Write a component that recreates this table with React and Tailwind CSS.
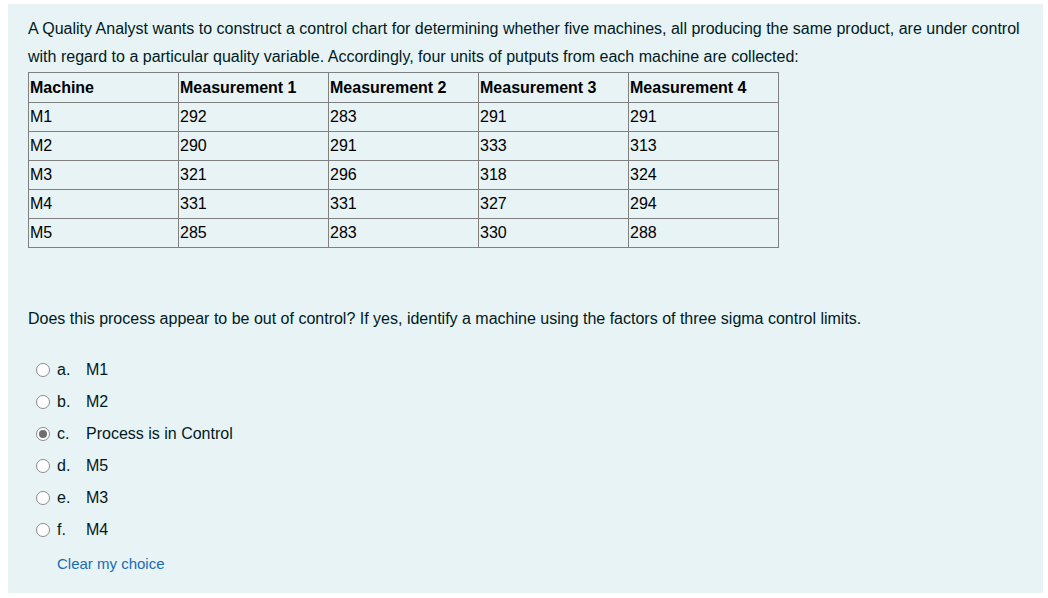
import React from "react";

const rows = [
  ["M1", "292", "283", "291", "291"],
  ["M2", "290", "291", "333", "313"],
  ["M3", "321", "296", "318", "324"],
  ["M4", "331", "331", "327", "294"],
  ["M5", "285", "283", "330", "288"],
];
const heads = ["Machine", "Measurement 1", "Measurement 2", "Measurement 3", "Measurement 4"];
const options = [
  ["a.", "M1", false],
  ["b.", "M2", false],
  ["c.", "Process is in Control", true],
  ["d.", "M5", false],
  ["e.", "M3", false],
  ["f.", "M4", false],
];

function Radio({ checked }) {
  return (
    <span className="w-[14px] h-[14px] rounded-full border border-[#8a8a8a] bg-white flex items-center justify-center shrink-0">
      {checked && <span className="w-[8px] h-[8px] rounded-full bg-[#6e6e6e]" />}
    </span>
  );
}

export default function App() {
  return (
    <div className="w-[1048px] h-[598px] bg-white pt-[4px] pl-[8px] pr-[5px] pb-[5px]" style={{ fontFamily: '"Liberation Sans", Arial, sans-serif' }}>
      <div className="h-full bg-[#e7f3f5] pl-[20px] pt-[11px] text-[#001a1e] text-[16px] leading-[28px]">
        <p>
          A Quality Analyst wants to construct a control chart for determining whether five machines, all producing the same product, are under control with regard to a particular quality variable. Accordingly, four units of putputs from each machine are collected:
        </p>
        <table className="mt-[1px] border-collapse text-[#000]">
          <thead>
            <tr className="h-[30px]">
              {heads.map((h) => (
                <th key={h} className="w-[150px] border border-[#808080] text-left font-bold px-[1px] py-0 leading-[18px]">{h}</th>
              ))}
            </tr>
          </thead>
          <tbody>
            {rows.map((r) => (
              <tr key={r[0]} className="h-[29px]">
                {r.map((c, i) => (
                  <td key={i} className="w-[150px] border border-[#808080] px-[1px] py-0 leading-[18px]">{c}</td>
                ))}
              </tr>
            ))}
          </tbody>
        </table>
        <p className="mt-[57px]">
          Does this process appear to be out of control? If yes, identify a machine using the factors of three sigma control limits.
        </p>
        <div className="mt-[21px] pl-[8px] flex flex-col">
          {options.map(([l, t, c]) => (
            <div key={l} className="h-[32px] flex items-center">
              <Radio checked={c} />
              <span className="ml-[7px] w-[29px]">{l}</span>
              <span>{t}</span>
            </div>
          ))}
        </div>
        <div className="pl-[29px] mt-[4px] text-[15px] text-[#1a6bb3]">Clear my choice</div>
      </div>
    </div>
  );
}
